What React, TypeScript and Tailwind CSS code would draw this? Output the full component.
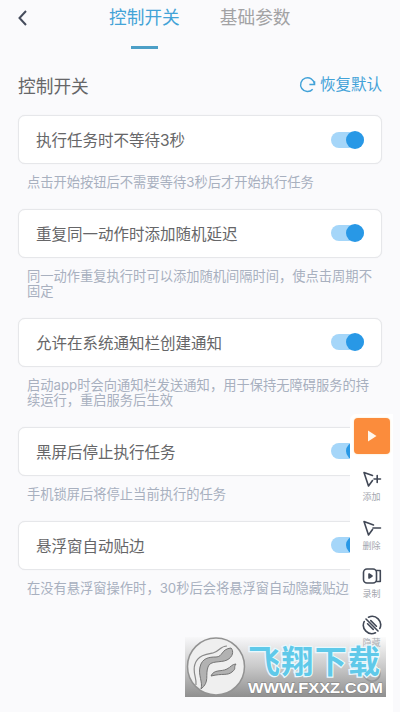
import type { ReactNode } from "react";

interface Setting {
  title: string;
  lines: string[];
}

const settings: Setting[] = [
  { title: "执行任务时不等待3秒", lines: ["点击开始按钮后不需要等待3秒后才开始执行任务"] },
  { title: "重复同一动作时添加随机延迟", lines: ["同一动作重复执行时可以添加随机间隔时间，使点击周期不", "固定"] },
  { title: "允许在系统通知栏创建通知", lines: ["启动app时会向通知栏发送通知，用于保持无障碍服务的持", "续运行，重启服务后生效"] },
  { title: "黑屏后停止执行任务", lines: ["手机锁屏后将停止当前执行的任务"] },
  { title: "悬浮窗自动贴边", lines: ["在没有悬浮窗操作时，30秒后会将悬浮窗自动隐藏贴边"] },
];

function Toggle() {
  return (
    <span className="flex h-4 w-[33px] items-center justify-end rounded-full bg-[#a5d6f9]">
      <span className="h-[18px] w-[18px] shrink-0 rounded-full bg-[#2898e6]" />
    </span>
  );
}

function SettingRow({ title, lines }: Setting) {
  return (
    <section className="mb-[18px]">
      <div className="flex h-[49px] items-center justify-between rounded-[7px] border-[1.5px] border-[#e6e7ea] bg-white pl-[17px] pr-[17px] shadow-[0_0_1px_#e4e5e8]">
        <h3 className="pt-[3px] text-[15.5px] leading-none text-[#666668]">{title}</h3>
        <Toggle />
      </div>
      <p className="mt-[11px] pl-[9px] text-[13.28px] leading-[15.6px] text-[#a8b0bf]">
        {lines.map((line) => (
          <span key={line} className="block whitespace-nowrap">
            {line}
          </span>
        ))}
      </p>
    </section>
  );
}

function ToolItem({ label, children }: { label: string; children: ReactNode }) {
  return (
    <div className="flex h-[48.7px] shrink-0 flex-col items-center">
      <svg viewBox="0 0 20 20" className="h-5 w-5" fill="none" stroke="#414856" strokeWidth="1.6" strokeLinecap="round" strokeLinejoin="round">
        {children}
      </svg>
      <span className="mt-[3px] text-[9px] leading-[10px] text-[#a3a6ae]">{label}</span>
    </div>
  );
}

function Toolbar() {
  return (
    <aside className="absolute left-[350px] top-[414px] flex h-[298px] w-[43px] flex-col items-center overflow-hidden rounded-tl-md bg-white pt-1">
      <div className="mb-[15px] flex h-9 w-9 shrink-0 items-center justify-center rounded-[4px] bg-[#fb8c3c] shadow-[0_0_2px_#fddcae]">
        <svg viewBox="0 0 12 12" className="h-3 w-3" fill="#fff7ec">
          <path d="M2 0.5 10.5 6 2 11.5Z" />
        </svg>
      </div>
      <ToolItem label="添加">
        <path d="M10.500 6.500 2 3.500 6.500 17 10.500 11.500M12 10H18.500M15.200 6.500V13.500" />
      </ToolItem>
      <ToolItem label="删除">
        <path d="M11.500 7 2 3.500 6.500 17 10.500 11.500M11 10H18.500" />
      </ToolItem>
      <ToolItem label="录制">
        <rect x="1.500" y="3" width="13" height="14" rx="3.500" />
        <path d="M14.500 4.500H18.300V15.500H14.500" />
        <path d="M7 8 10 10 7 12Z" fill="#414856" />
      </ToolItem>
      <ToolItem label="隐藏">
        <path d="M4 4 16 16M6.500 2.200A8.500 8.500 0 0 1 17.800 13.500M13.500 17.800A8.500 8.500 0 0 1 2.200 6.500M8.800 5.600 14.400 11.200M5.600 8.800 11.200 14.400" />
      </ToolItem>
      <ToolItem label="退出">
        <path d="M4.500 3.500A8 8 0 1 0 15.500 3.500" />
      </ToolItem>
    </aside>
  );
}

function Watermark() {
  return (
    <div className="absolute left-[185px] top-[637px] h-[60px] w-[201px] bg-linear-to-b from-[#e0e0e0]/10 via-[#b8b8b8]/75 to-[#8f8f8f]">
      <svg viewBox="0 0 201 60" className="h-full w-full">
        <circle cx="31" cy="29.500" r="28.500" fill="#efefef" stroke="#929292" strokeWidth="1.500" />
        <g fill="#b2b2b2" stroke="#747474" strokeWidth="1" strokeLinejoin="round">
          <path d="M16 52C18 45 13 38 15 30 17 21 24 20 31 20 38 20 36 12 46 11 49 14 48 20 42 23 36 26 25 23 23 30 20 38 25 45 16 52Z" />
          <path d="M26 39C29 32 36 35 42 32 46 30 47 27 51 27 48 31 52 31 47 35 42 39 38 36 26 39Z" />
        </g>
        <path d="M11 48C12 41 7 35 10 27 13 18 22 17 28 16 34 15 35 9 42 9" fill="none" stroke="#8a8a8a" strokeWidth="1.200" />
        <text x="63" y="36" textLength="132" fontSize="32" fontWeight="700" fill="#5fc9e9" stroke="#e9f8fd" strokeWidth="2.500" paintOrder="stroke" fontFamily="Noto Sans CJK SC, sans-serif">
          飞翔下载
        </text>
        <text x="63" y="55.500" textLength="135" lengthAdjust="spacingAndGlyphs" fontSize="14" fontWeight="700" fill="#fff" stroke="#808080" strokeWidth="0.800" paintOrder="stroke" fontFamily="Liberation Sans, sans-serif">
          WWW.FXXZ.COM
        </text>
      </svg>
    </div>
  );
}

export default function App() {
  return (
    <main className="relative h-[712px] w-[400px] overflow-hidden bg-[#fafafc] font-['Inter','Noto_Sans_CJK_SC',sans-serif]">
      <header className="flex h-[50px] pl-[18px] pt-[9px]">
        <svg viewBox="0 0 9 16" className="mt-px h-4 w-[9px]" fill="none" stroke="#454c5c" strokeWidth="2">
          <path d="M8 1 1.500 8 8 15" />
        </svg>
        <nav className="ml-[82px] flex gap-[40px] text-[17.700px] leading-[18px]">
          <div className="flex flex-col items-center text-[#43a3d7]">
            控制开关
            <span className="mt-[19px] h-[3px] w-[27px] bg-[#4c9fc7]" />
          </div>
          <div className="text-[#a2a2a4]">基础参数</div>
        </nav>
      </header>
      <div className="flex h-[65px] items-center justify-between px-[18px] pt-[9px]">
        <h2 className="text-[17.700px] text-[#666668]">控制开关</h2>
        <button className="-mt-[5px] flex items-center gap-1 text-[15.500px] text-[#42a2d8]">
          <svg viewBox="0 0 18 18" className="-mt-px h-[17px] w-[17px]" fill="none" stroke="currentColor" strokeWidth="1.500">
            <path d="M14.500 14A7.300 7.300 0 1 1 16.300 8.500M11 9H16.500V5.500" />
          </svg>
          恢复默认
        </button>
      </div>
      <div className="px-[18px]">
        {settings.map((item) => (
          <SettingRow key={item.title} {...item} />
        ))}
      </div>
      <Toolbar />
      <Watermark />
    </main>
  );
}
